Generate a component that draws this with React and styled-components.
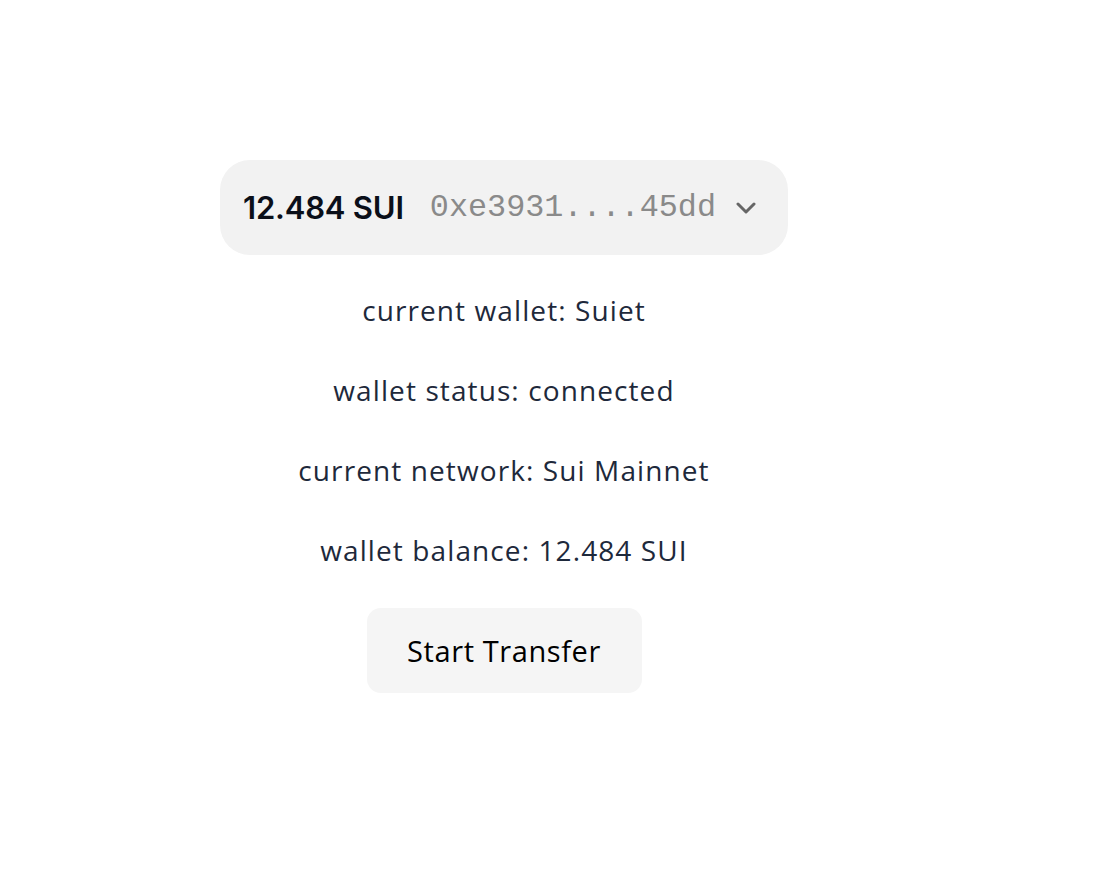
import React from 'react'
import styled, { createGlobalStyle } from 'styled-components'

const Global = createGlobalStyle`
  html, body {
    margin: 0;
    padding: 0;
    background: #ffffff;
  }
`

const Page = styled.div`
  padding: 160px 0 0 220px;
`

const Column = styled.div`
  width: 568px;
  display: flex;
  flex-direction: column;
  align-items: center;
  font-family: "Open Sans", "Noto Sans", sans-serif;
`

const AccountPill = styled.button`
  box-sizing: border-box;
  width: 568px;
  height: 95px;
  display: flex;
  align-items: center;
  padding: 0 20px 0 23px;
  border: none;
  border-radius: 30px;
  background: #f2f2f2;
  white-space: nowrap;
  cursor: pointer;

  & > * {
    flex-shrink: 0;
  }
`

const Balance = styled.span`
  font-family: Inter, "Liberation Sans", sans-serif;
  font-size: 31px;
  font-weight: 600;
  color: #0b0f19;
  letter-spacing: -0.2px;
  margin-right: 26px;
`

const Address = styled.span`
  font-family: "Liberation Mono", "DejaVu Sans Mono", monospace;
  font-size: 31.8px;
  color: #8a8a8a;
  margin-right: 20px;
`

const Info = styled.p`
  margin: 0;
  height: 80px;
  display: flex;
  align-items: center;
  font-size: 28px;
  letter-spacing: 1.1px;
  color: #1e293b;
  white-space: nowrap;
  transform: translateY(-2px);
`

const List = styled.div`
  margin-top: 17px;
  display: flex;
  flex-direction: column;
  align-items: center;
`

const TransferButton = styled.button`
  margin-top: 16px;
  width: 275px;
  height: 85px;
  border: none;
  border-radius: 14px;
  background: #f5f5f5;
  font-family: "Open Sans", "Noto Sans", sans-serif;
  font-size: 29px;
  letter-spacing: 0.6px;
  color: #000;
  cursor: pointer;
`

const Chevron = () => (
  <svg width="20" height="12" viewBox="0 0 20 12" fill="none">
    <path d="M2 2 L10 10 L18 2" stroke="#666" strokeWidth="3" strokeLinecap="round" strokeLinejoin="round" />
  </svg>
)

const App = () => {
  const info = [
    'current wallet: Suiet',
    'wallet status: connected',
    'current network: Sui Mainnet',
    'wallet balance: 12.484 SUI',
  ]
  return (
    <Page>
      <Global />
      <Column>
        <AccountPill>
          <Balance>12.484 SUI</Balance>
          <Address>0xe3931....45dd</Address>
          <Chevron />
        </AccountPill>
        <List>
          {info.map((t) => <Info key={t}>{t}</Info>)}
        </List>
        <TransferButton>Start Transfer</TransferButton>
      </Column>
    </Page>
  )
}

export default App
